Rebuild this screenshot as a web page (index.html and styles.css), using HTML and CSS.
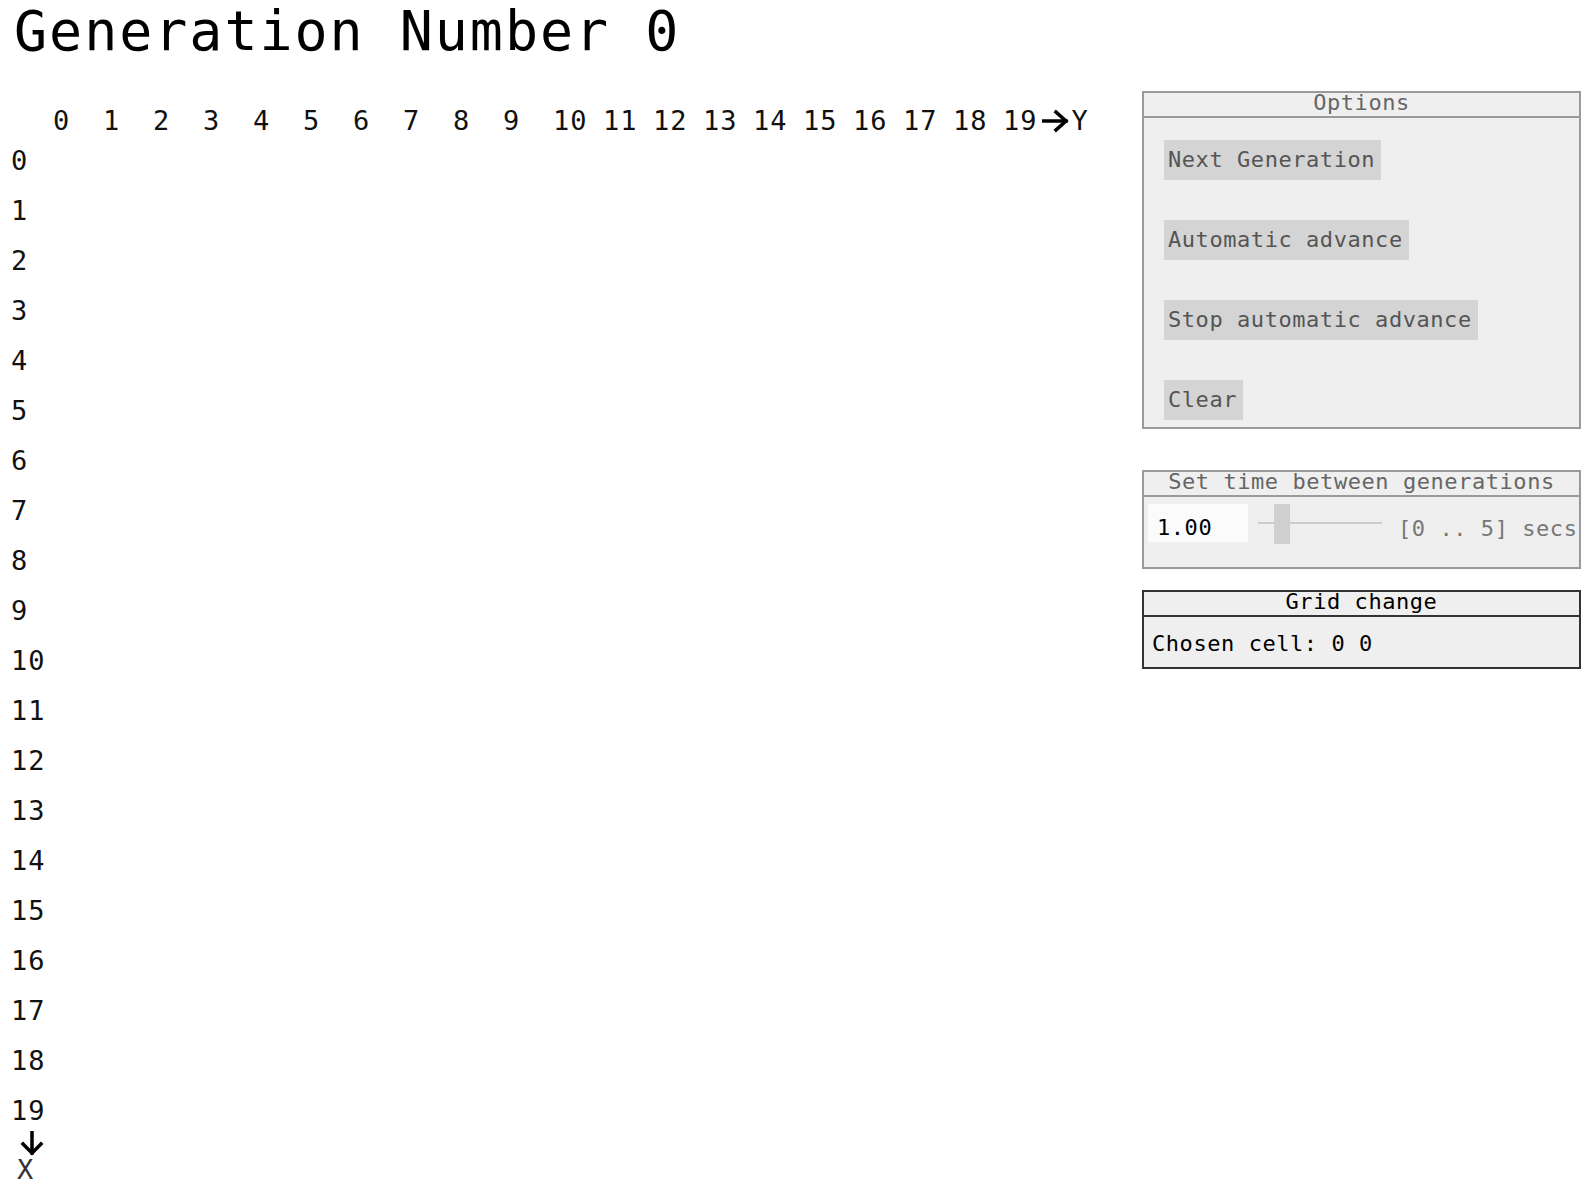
FILE: index.html
```html
<!DOCTYPE html>
<html lang="en">
<head>
<meta charset="utf-8">
<title>Game of Life</title>
<link rel="stylesheet" href="styles.css">
</head>
<body>
<h1 class="title">Generation Number 0</h1>
<div class="main">
  <div class="board">
    <div class="hdr">
      <span class="cl">0</span><span class="cl">1</span><span class="cl">2</span><span class="cl">3</span><span class="cl">4</span><span class="cl">5</span><span class="cl">6</span><span class="cl">7</span><span class="cl">8</span><span class="cl">9</span><span class="cl">10</span><span class="cl">11</span><span class="cl">12</span><span class="cl">13</span><span class="cl">14</span><span class="cl">15</span><span class="cl">16</span><span class="cl">17</span><span class="cl">18</span><span class="cl cl-last">19<svg class="arr-r" width="27" height="24" viewBox="0 0 27 24"><line x1="1" y1="12" x2="24" y2="12"/><polyline points="14,3 24,12 14,21"/></svg>Y</span>
    </div>
    <div class="row"><span class="rl">0</span></div>
    <div class="row"><span class="rl">1</span></div>
    <div class="row"><span class="rl">2</span></div>
    <div class="row"><span class="rl">3</span></div>
    <div class="row"><span class="rl">4</span></div>
    <div class="row"><span class="rl">5</span></div>
    <div class="row"><span class="rl">6</span></div>
    <div class="row"><span class="rl">7</span></div>
    <div class="row"><span class="rl">8</span></div>
    <div class="row"><span class="rl">9</span></div>
    <div class="row"><span class="rl">10</span></div>
    <div class="row"><span class="rl">11</span></div>
    <div class="row"><span class="rl">12</span></div>
    <div class="row"><span class="rl">13</span></div>
    <div class="row"><span class="rl">14</span></div>
    <div class="row"><span class="rl">15</span></div>
    <div class="row"><span class="rl">16</span></div>
    <div class="row"><span class="rl">17</span></div>
    <div class="row"><span class="rl">18</span></div>
    <div class="row"><span class="rl">19</span></div>
    <div class="foot">
      <svg class="arr-d" width="24" height="25" viewBox="0 0 24 25"><line x1="12" y1="1" x2="12" y2="22"/><polyline points="3,13 12,22 21,13"/></svg>
      <div class="xl">X</div>
    </div>
  </div>

  <div class="panel">
    <section class="box">
      <div class="box-title">Options</div>
      <div class="box-body opts">
        <button class="btn">Next Generation</button>
        <button class="btn">Automatic advance</button>
        <button class="btn">Stop automatic advance</button>
        <button class="btn">Clear</button>
      </div>
    </section>

    <section class="box box-time">
      <div class="box-title">Set time between generations</div>
      <div class="box-body time">
        <input class="num" type="text" value="1.00">
        <div class="slider"><div class="thumb"></div></div>
        <span class="range">[0 .. 5] secs</span>
      </div>
    </section>

    <section class="box box-dark">
      <div class="box-title dark">Grid change</div>
      <div class="box-body cell">Chosen cell: 0 0</div>
    </section>
  </div>
</div>
</body>
</html>
```

FILE: styles.css
```css
html, body {
  margin: 0;
  padding: 0;
  background: #ffffff;
  overflow: hidden;
}

body {
  font-family: "DejaVu Sans Mono", "Liberation Mono", monospace;
  color: #111;
}

.title {
  margin: 1px 0 0 0;
  padding-left: 14px;
  font-size: 55px;
  letter-spacing: 1.95px;
  line-height: 60px;
  font-weight: normal;
  color: #000;
  height: 60px;
}

.main {
  display: flex;
  justify-content: space-between;
  align-items: flex-start;
  margin-top: 30px;
}

.board {
  margin-left: 11px;
  padding-top: 15px;
  font-size: 27px;
  letter-spacing: 1px;
}

.hdr {
  display: flex;
  height: 30px;
  line-height: 30px;
  padding-left: 39px;
  white-space: nowrap;
}

.cl {
  width: 50px;
  flex: none;
  padding-left: 3px;
  box-sizing: border-box;
}

.cl-last {
  overflow: visible;
}

.arr-r {
  vertical-align: -3px;
  margin-left: 4px;
  margin-right: 3px;
}

.arr-r line, .arr-r polyline,
.arr-d line, .arr-d polyline {
  fill: none;
  stroke: #000;
  stroke-width: 3.5;
  stroke-linecap: square;
  stroke-linejoin: miter;
}

.row {
  height: 50px;
  line-height: 50px;
}

.rl {
  display: inline-block;
}

.foot {
  margin-top: -5px;
}

.arr-d {
  display: block;
  margin-left: 9px;
}

.xl {
  line-height: 27px;
  height: 27px;
  padding-left: 6px;
  color: #333;
}

/* Right panel */
.panel {
  width: 439px;
  margin-right: 5px;
  flex: none;
  font-size: 22px;
  letter-spacing: 0.56px;
}

.box {
  border: 2px solid #9a9a9a;
  background: #efefef;
}

.box-time {
  margin-top: 41px;
}

.box-dark {
  margin-top: 21px;
  border-color: #333;
}

.box-title {
  text-align: center;
  line-height: 19px;
  height: 19px;
  padding-bottom: 4px;
  border-bottom: 2px solid #9a9a9a;
  color: #666;
  white-space: nowrap;
}

.box-title.dark {
  border-bottom-color: #333;
  color: #000;
}

.opts {
  display: flex;
  flex-direction: column;
  align-items: flex-start;
  gap: 40px;
  padding: 22px 20px 7px 20px;
}

.btn {
  font-family: inherit;
  font-size: 22px;
  letter-spacing: 0.56px;
  height: 40px;
  line-height: 40px;
  padding: 0 6px 0 4px;
  margin: 0;
  border: 0;
  background: #d4d4d4;
  color: #555;
  white-space: nowrap;
}

.time {
  display: flex;
  align-items: flex-start;
  padding: 7px 0 23px 4px;
}

.num {
  width: 100px;
  height: 38px;
  box-sizing: border-box;
  border: 0;
  margin: 0;
  padding: 9px 0 0 9px;
  background: #fbfbfb;
  font-family: inherit;
  font-size: 22px;
  letter-spacing: 0.56px;
  color: #000;
  outline: none;
}

.slider {
  width: 124px;
  height: 40px;
  margin-left: 10px;
  flex: none;
  background: linear-gradient(to bottom, transparent 18px, #cdcdcd 18px, #cdcdcd 20px, transparent 20px);
}

.thumb {
  width: 16px;
  height: 40px;
  margin-left: 16px;
  background: #cfcfcf;
}

.range {
  margin-left: 16px;
  line-height: 30px;
  padding-top: 10px;
  color: #777;
  white-space: nowrap;
}

.cell {
  padding: 7px 0 3px 8px;
  line-height: 40px;
  height: 40px;
  color: #000;
}
```
